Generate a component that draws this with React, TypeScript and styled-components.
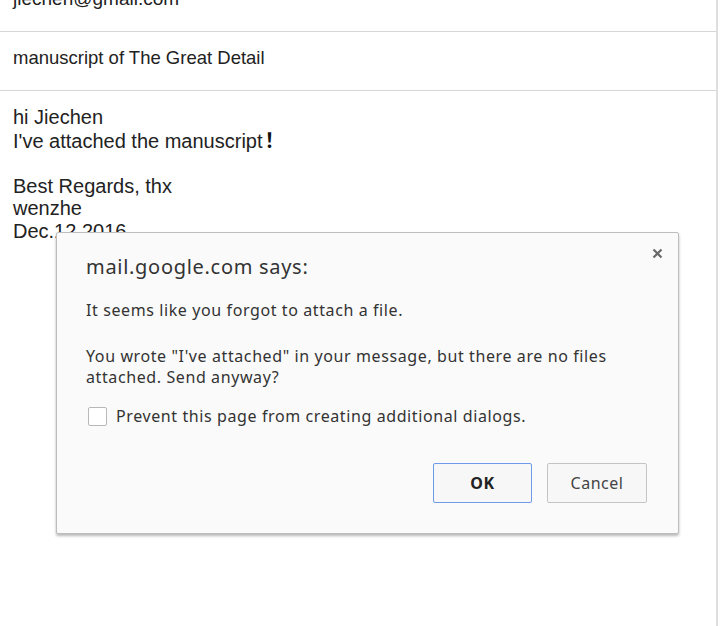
import React from "react";
import styled, { createGlobalStyle } from "styled-components";

const Global = createGlobalStyle`
  html, body { margin: 0; padding: 0; background: #ffffff; }
  body { width: 720px; height: 626px; overflow: hidden; }
  * { box-sizing: border-box; }
`;

const Page = styled.div`
  position: relative;
  display: flex;
  width: 720px;
  height: 626px;
  overflow: hidden;
  background: #ffffff;
`;

const Compose = styled.div`
  display: flex;
  flex-direction: column;
  width: 718px;
  height: 100%;
  border-right: 2px solid #dedede;
  font-family: "Liberation Sans", Arial, sans-serif;
  color: #222222;
`;

const FieldRow = styled.div<{ $h: number; $pt: number }>`
  height: ${(p) => p.$h}px;
  flex: none;
  padding: ${(p) => p.$pt}px 0 0 13px;
  border-bottom: 1px solid #d6d6d6;
  overflow: visible;
`;

const FieldText = styled.div<{ $size: number; $mt?: number }>`
  margin-top: ${(p) => p.$mt ?? 0}px;
  font-size: ${(p) => p.$size}px;
  line-height: 22px;
  white-space: nowrap;
`;

const Body = styled.div`
  padding: 15px 0 0 13px;
  font-size: 20px;
  line-height: 22.5px;
`;

const Line = styled.div`
  min-height: 22.5px;
  white-space: nowrap;
`;

const Bang = styled.span`
  font-family: "Noto Sans CJK SC", sans-serif;
  font-weight: 700;
  color: #111;
  padding-left: 2px;
`;

const Dialog = styled.div`
  position: absolute;
  left: 56px;
  top: 232px;
  width: 623px;
  height: 302px;
  background: #fafafa;
  border: 1px solid #bdbdbd;
  border-radius: 2px;
  box-shadow: 0 2px 3px rgba(0, 0, 0, 0.28);
  padding: 21px 31px 30px 29px;
  font-family: "Noto Sans", "Open Sans", sans-serif;
  color: #333333;
  display: flex;
  flex-direction: column;
`;

const Close = styled.button`
  position: absolute;
  top: 12px;
  right: 13px;
  width: 16px;
  height: 16px;
  padding: 0;
  border: none;
  background: transparent;
  display: flex;
  align-items: center;
  justify-content: center;
`;

const Title = styled.div`
  font-size: 20px;
  letter-spacing: 0.7px;
  line-height: 25px;
  color: #333;
`;

const Message = styled.div<{ $mt: number }>`
  margin-top: ${(p) => p.$mt}px;
  font-size: 16px;
  letter-spacing: 0.6px;
  line-height: 21.5px;
  color: #333;
`;

const CheckRow = styled.label`
  margin-top: 18px;
  display: flex;
  align-items: center;
  height: 19px;
  font-size: 16px;
  letter-spacing: 0.6px;
  line-height: 19px;
  color: #333;
`;

const Box = styled.span`
  width: 19px;
  height: 19px;
  border: 1px solid #b8b8b8;
  border-radius: 2px;
  background: #ffffff;
  margin: 0 9px 0 2px;
  flex: none;
`;

const Buttons = styled.div`
  margin-top: auto;
  display: flex;
  justify-content: flex-end;
  gap: 15px;
`;

const Btn = styled.button<{ $primary?: boolean }>`
  width: ${(p) => (p.$primary ? 99 : 100)}px;
  height: 40px;
  border: 1px solid ${(p) => (p.$primary ? "#6f9ae8" : "#c4c4c4")};
  border-radius: 2px;
  background: #f7f7f7;
  font-family: "Noto Sans", "Open Sans", sans-serif;
  font-size: 16px;
  letter-spacing: 0.5px;
  font-weight: ${(p) => (p.$primary ? 700 : 400)};
  color: ${(p) => (p.$primary ? "#222" : "#444")};
  padding: 0;
`;

export default function App() {
  return (
    <>
      <Global />
      <Page>
        <Compose>
          <FieldRow $h={32} $pt={0}>
            <FieldText $size={19} $mt={-12}>
              jiechen@gmail.com
            </FieldText>
          </FieldRow>
          <FieldRow $h={59} $pt={15}>
            <FieldText $size={18.5}>manuscript of The Great Detail</FieldText>
          </FieldRow>
          <Body>
            <Line>hi Jiechen</Line>
            <Line>
              I've attached the manuscript<Bang>！</Bang>
            </Line>
            <Line />
            <Line>Best Regards, thx</Line>
            <Line>wenzhe</Line>
            <Line>Dec.12 2016</Line>
          </Body>
        </Compose>
        <Dialog role="dialog">
          <Close aria-label="Close">
            <svg width="11" height="11" viewBox="0 0 11 11">
              <path d="M1.5 1.5 L9.5 9.5 M9.5 1.5 L1.5 9.5" stroke="#6a6a6a" strokeWidth="2.2" />
            </svg>
          </Close>
          <Title>mail.google.com says:</Title>
          <Message $mt={21}>It seems like you forgot to attach a file.</Message>
          <Message $mt={24}>
            You wrote "I've attached" in your message, but there are no files
            <br />
            attached. Send anyway?
          </Message>
          <CheckRow>
            <Box />
            Prevent this page from creating additional dialogs.
          </CheckRow>
          <Buttons>
            <Btn $primary>OK</Btn>
            <Btn>Cancel</Btn>
          </Buttons>
        </Dialog>
      </Page>
    </>
  );
}
